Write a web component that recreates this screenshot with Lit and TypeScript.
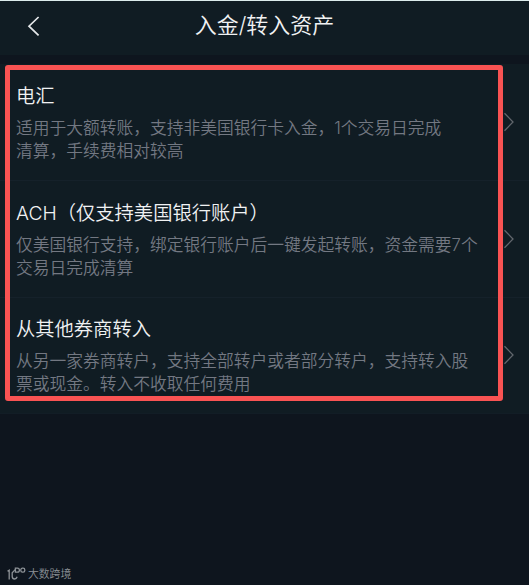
import { LitElement, html, css } from "lit";
import { customElement, property } from "lit/decorators.js";

@customElement("transfer-option")
class TransferOption extends LitElement {
  @property() heading = "";
  @property({ attribute: false }) lines: string[] = [];

  static styles = css`
    :host {
      display: flex;
      align-items: flex-start;
      box-sizing: border-box;
      height: 117px;
      padding: 17px 15px 0 16px;
      border-bottom: 1px solid #15212a;
    }
    :host(:last-of-type) {
      height: 116px;
      padding-top: 16px;
      border-bottom-color: #121d26;
    }
    .body { flex: 1; min-width: 0; }
    .heading {
      font-size: 19.3px;
      line-height: 30px;
      color: #f0f2f3;
      white-space: nowrap;
    }
    .desc {
      margin-top: 6px;
      font-size: 16.75px;
      line-height: 23px;
      color: #737882;
      white-space: nowrap;
    }
    .line { display: block; }
    .arrow { flex: none; width: 13px; height: 20px; margin-top: 31px; }
  `;

  render() {
    return html`
      <div class="body">
        <div class="heading">${this.heading}</div>
        <div class="desc">${this.lines.map((l) => html`<span class="line">${l}</span>`)}</div>
      </div>
      <svg class="arrow" viewBox="0 0 13 20" fill="none" stroke="#62676d" stroke-width="1.3">
        <path d="M3.5 1.2 12 10 3.5 18.8" />
      </svg>
    `;
  }
}

@customElement("app-root")
class AppRoot extends LitElement {
  static styles = css`
    :host {
      display: flex;
      flex-direction: column;
      position: relative;
      box-sizing: border-box;
      width: 529px;
      height: 585px;
      overflow: hidden;
      border-top: 1px solid #dcecec;
      background: #0e151e;
      font-family: "Inter", "Noto Sans CJK SC", sans-serif;
      font-weight: 350;
    }
    .bar {
      display: grid;
      grid-template-columns: 64px 1fr 64px;
      align-items: center;
      height: 54px;
      padding-bottom: 4px;
      box-sizing: border-box;
      background: #101c23;
    }
    .back { width: 13px; height: 20px; margin-left: 27px; }
    .title {
      margin-bottom: 2px;
      text-align: center;
      font-size: 22px;
      line-height: 32px;
      color: #f0f2f3;
    }
    .list { margin-top: 9px; background: #101c23; }
    .frame {
      position: absolute;
      left: 5px;
      top: 64px;
      width: 498px;
      height: 336px;
      box-sizing: border-box;
      border: 5px solid #f95353;
      border-radius: 3px;
    }
    .mark {
      display: flex;
      align-items: center;
      gap: 2px;
      margin: auto 0 4px 7px;
      font-family: "Noto Sans CJK SC", sans-serif;
      font-size: 10.8px;
      line-height: 15px;
      color: #8d9297;
    }
    .logo { width: 19px; height: 14px; }
  `;

  render() {
    return html`
      <header class="bar">
        <svg class="back" viewBox="0 0 13 20" fill="none" stroke="#e4e7e9" stroke-width="1.7">
          <path d="M11.6 1 2 10.2 11.6 19.4" />
        </svg>
        <div class="title">入金/转入资产</div>
      </header>
      <main class="list">
        <transfer-option
          heading="电汇"
          .lines=${["适用于大额转账，支持非美国银行卡入金，1个交易日完成", "清算，手续费相对较高"]}
        ></transfer-option>
        <transfer-option
          heading="ACH（仅支持美国银行账户）"
          .lines=${["仅美国银行支持，绑定银行账户后一键发起转账，资金需要7个", "交易日完成清算"]}
        ></transfer-option>
        <transfer-option
          heading="从其他券商转入"
          .lines=${["从另一家券商转户，支持全部转户或者部分转户，支持转入股", "票或现金。转入不收取任何费用"]}
        ></transfer-option>
      </main>
      <div class="frame"></div>
      <footer class="mark">
        <svg class="logo" viewBox="0 0 19 14" fill="none" stroke="#8d9297" stroke-width="1.3">
          <path d="M.5 4.3 2.2 3.2V12.4M8.2 2.6 5.2 5.8V9.6Q5.4 12 7.6 12 9.4 12 10.2 9.8" />
          <path d="M8.4 1.2h2q2 0 2 2t-2 2h-2z" />
          <rect x="13.8" y="1.2" width="4" height="4" rx="1.7" />
        </svg>
        <span>大数跨境</span>
      </footer>
    `;
  }
}
